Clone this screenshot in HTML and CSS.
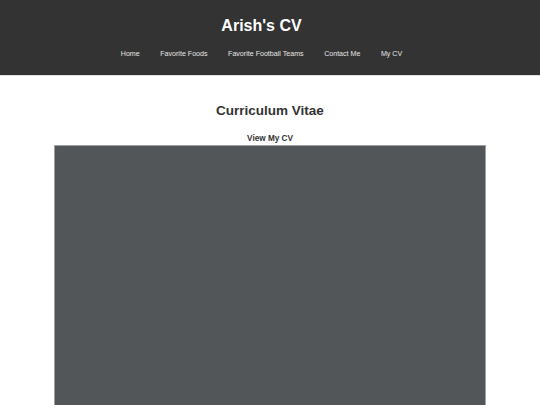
FILE: index.html
```html
<!DOCTYPE html>
<html>
<head>
<meta charset="utf-8">
<title>Arish's CV</title>
<link rel="stylesheet" href="styles.css">
</head>
<body>
<header class="site-header">
  <h1 class="site-title">Arish's CV</h1>
  <nav class="site-nav">
    <a href="#">Home</a>
    <a href="#">Favorite Foods</a>
    <a href="#">Favorite Football Teams</a>
    <a href="#">Contact Me</a>
    <a href="#">My CV</a>
  </nav>
</header>
<main class="content">
  <h2 class="page-title">Curriculum Vitae</h2>
  <p class="cv-label">View My CV</p>
  <div class="cv-frame"></div>
</main>
</body>
</html>
```

FILE: styles.css
```css
html, body {
  margin: 0;
  padding: 0;
  background: #fff;
  font-family: "Liberation Sans", Arial, sans-serif;
}
.site-header {
  background: #333;
  height: 76px;
  box-sizing: border-box;
  padding: 15px 17px 0 0;
  border-bottom: 1px solid #e0e0e0;
  text-align: center;
}
.site-title {
  margin: 0;
  color: #fff;
  font-size: 16px;
  line-height: 22px;
  font-weight: bold;
}
.site-nav {
  margin-top: 12px;
  display: flex;
  justify-content: center;
  gap: 20.5px;
}
.site-nav a {
  color: #e6e6e6;
  text-decoration: none;
  font-size: 7.1px;
  line-height: 10px;
}
.content {
  text-align: center;
  padding-top: 26px;
}
.page-title {
  margin: 0;
  color: #333;
  font-size: 13.5px;
  line-height: 18px;
  font-weight: bold;
}
.cv-label {
  margin: 14px 0 0;
  color: #333;
  font-size: 8.2px;
  line-height: 10px;
  font-weight: bold;
}
.cv-frame {
  width: 432px;
  height: 400px;
  margin: 1px auto 0;
  box-sizing: border-box;
  background: #525659;
  border: 1px solid #a0a0a0;
}
```
